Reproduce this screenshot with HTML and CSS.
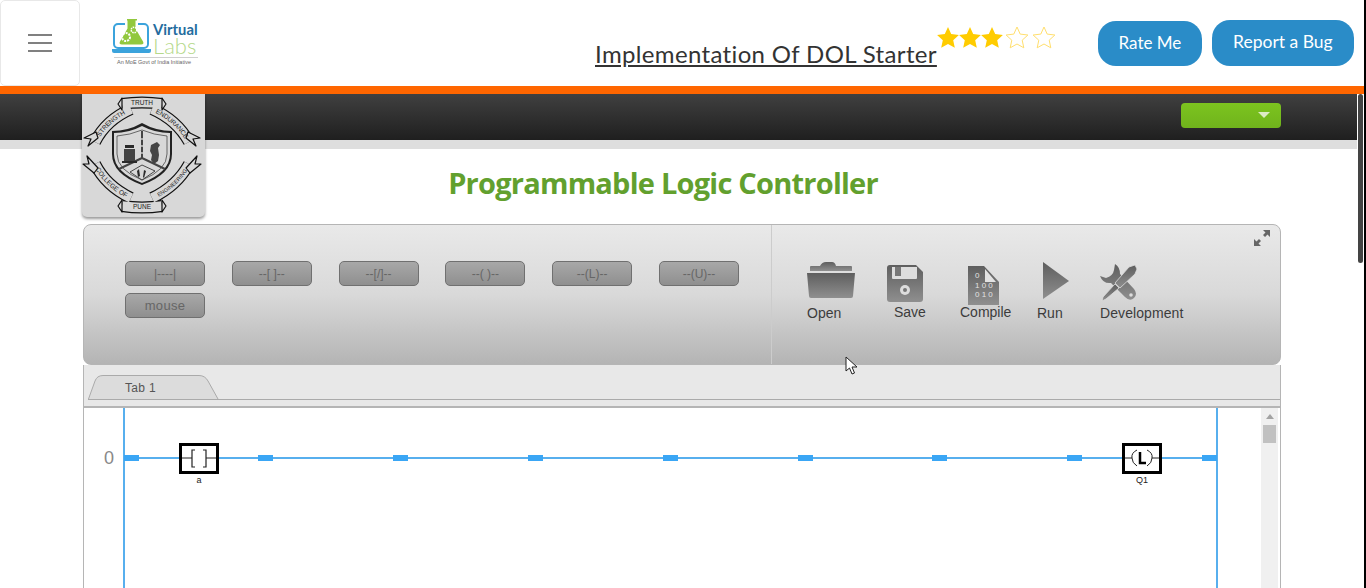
FILE: index.html
```html
<!DOCTYPE html>
<html lang="en">
<head>
<meta charset="utf-8">
<title>Implementation Of DOL Starter</title>
<link rel="stylesheet" href="styles.css">
</head>
<body>
<div class="viewport">
  <header class="topbar">
    <button class="menu-btn" aria-label="Menu"><span></span><span></span><span></span></button>
    <div class="vl-logo">
      <svg width="88" height="50" viewBox="0 0 88 50">
        <rect x="3" y="8" width="34" height="24" rx="4" fill="none" stroke="#3ba3dc" stroke-width="2"/>
        <path d="M14 2h14v3h-1v7l9 17H6l8-17V5z" fill="#fff"/>
        <path d="M16 3h10v1.500h-1.500v8l7.500 13q1.500 3-2 3H11q-3.500 0-2-3l7.500-13v-8H16z" fill="#92c83e"/>
        <circle cx="15" cy="21" r="4" fill="none" stroke="#fff" stroke-width="2" stroke-dasharray="2 1"/>
        <circle cx="23" cy="14" r="2.800" fill="none" stroke="#fff" stroke-width="1.500" stroke-dasharray="1.500 .8"/>
        <path d="M1 33h39v2q0 2-2 2H3q-2 0-2-2z" fill="#3ba3dc"/>
        <text x="42" y="19" class="vl-virtual">Virtual</text>
        <text x="42" y="38" class="vl-labs">Labs</text>
        <rect x="3" y="41" width="84" height="1" fill="#cfcfcf"/>
        <text x="6" y="48" class="vl-tag">An MoE Govt of India Initiative</text>
      </svg>
    </div>
    <h1 class="exp-title">Implementation Of DOL Starter</h1>
    <div class="stars">
      <svg width="120" height="24" viewBox="0 0 120 24">
        <defs><path id="star" d="M12 1L15.200 8.100 22.900 9 17.200 14.200 18.800 21.800 12 18 5.200 21.800 6.800 14.200 1.100 9 8.800 8.100z"/></defs>
        <use href="#star" x="0" fill="#ffcc00"/>
        <use href="#star" x="22" fill="#ffcc00"/>
        <use href="#star" x="44" fill="#ffcc00"/>
        <use href="#star" x="69" class="star-off"/>
        <use href="#star" x="96" class="star-off"/>
      </svg>
    </div>
    <button class="pill pill-rate">Rate Me</button>
    <button class="pill pill-bug">Report a Bug</button>
  </header>

  <div class="darkbar">
    <div class="darkbar-inner"><button class="green-select"><i class="caret"></i></button></div>
  </div>
  <div class="subbar"></div>

  <div class="crest">
    <svg width="123" height="123" viewBox="0 0 123 123">
      <defs>
        <path id="rL" d="M13 48Q24 26 49 15"/>
        <path id="rR" d="M70 15Q95 26 107 48"/>
        <path id="rBL" d="M13 70Q24 92 49 104"/>
        <path id="rBR" d="M70 104Q95 92 107 70"/>
      </defs>
      <g fill="none" class="ribbon-out">
        <use href="#rL"/><use href="#rR"/><use href="#rBL"/><use href="#rBR"/>
        <path d="M40 10Q60 7 80 10"/>
        <path d="M40 112Q60 115 80 112"/>
      </g>
      <g fill="none" class="ribbon-in">
        <use href="#rL"/><use href="#rR"/><use href="#rBL"/><use href="#rBR"/>
        <path d="M40 10Q60 7 80 10"/>
        <path d="M40 112Q60 115 80 112"/>
      </g>
      <g fill="#d8d8d8" stroke="#111" stroke-width="1.200" stroke-linejoin="round">
        <path d="M16 44L6 52l3-7-7-1 12-6z"/>
        <path d="M104 44l10 8-3-7 7-1-12-6z"/>
        <path d="M16 74L5 62l2 8-6 0 11 9z"/>
        <path d="M104 74l11-12-2 8 6 0-11 9z"/>
        <path d="M40 4l-4 6 4 6zM80 4l4 6-4 6z"/>
        <path d="M40 106l-4 6 4 6zM80 106l4 6-4 6z"/>
      </g>
      <path d="M30 37Q46 37 60 29 74 37 90 37V60Q90 80 60 91 30 80 30 60Z" fill="#222"/>
      <path d="M32 39Q47 39 60 32 73 39 88 39V60Q88 78 60 89 32 78 32 60Z" fill="#d8d8d8"/>
      <path d="M35 42Q48 41 60 36 72 41 85 42V60Q85 76 60 86 35 76 35 60Z" fill="none" stroke="#333" stroke-width=".7"/>
      <path d="M60 37V64M60 64L37 75M60 64L83 75" fill="none" stroke="#444" stroke-width="2"/>
      <g fill="#2a2a2a">
        <rect x="43" y="51" width="9" height="3"/>
        <path d="M42 55h11v12H42z" fill="#444"/>
        <path d="M40 67h15v2H40z"/>
        <circle cx="60" cy="45" r=".9" fill="#d8d8d8"/><circle cx="60" cy="52" r=".9" fill="#d8d8d8"/><circle cx="60" cy="59" r=".9" fill="#d8d8d8"/>
        <path d="M69 51l6-3 3 3-2 3 1 7-1 6-4 3-3-4 1-5-2-4z" fill="#444"/>
        <path d="M48 78l12-7 13 6-13 9z" fill="#d8d8d8" stroke="#222" stroke-width=".8"/>
        <path d="M55 77l2-2 1 7-2 1zM62 76l2 1-2 7-1-1z"/>
      </g>
      <text class="crest-txt" x="60" y="11" text-anchor="middle">TRUTH</text>
      <text class="crest-txt" dy="2"><textPath href="#rL" startOffset="50%" text-anchor="middle">STRENGTH</textPath></text>
      <text class="crest-txt" dy="2"><textPath href="#rR" startOffset="50%" text-anchor="middle">ENDURANCE</textPath></text>
      <text class="crest-txt" dy="2"><textPath href="#rBL" startOffset="50%" text-anchor="middle">COLLEGE OF</textPath></text>
      <text class="crest-txt crest-small" dy="2"><textPath href="#rBR" startOffset="50%" text-anchor="middle">ENGINEERING</textPath></text>
      <text class="crest-txt" x="60" y="115" text-anchor="middle">PUNE</text>
    </svg>
  </div>

  <main class="content">
    <h2 class="plc-title">Programmable Logic Controller</h2>
    <section class="panel">
      <div class="toolbar">
        <div class="tools-left">
          <button class="ladder-btn">|----|</button>
          <button class="ladder-btn">--[ ]--</button>
          <button class="ladder-btn">--[/]--</button>
          <button class="ladder-btn">--( )--</button>
          <button class="ladder-btn">--(L)--</button>
          <button class="ladder-btn">--(U)--</button>
          <button class="ladder-btn ladder-mouse">mouse</button>
        </div>
        <div class="tools-right">
          <div class="tool tool-open">
            <svg width="48" height="36" viewBox="0 0 48 36"><path d="M3 5q0-1 1-1h9q2-4 6-4h6q3 0 4 4h15q1 0 1 1v4H3z" fill="url(#ig)"/><path d="M0 11h48l-2 23q0 2-2 2H4q-2 0-2-2z" fill="url(#ig)"/></svg>
            <span>Open</span>
          </div>
          <div class="tool tool-save">
            <svg width="36" height="37" viewBox="0 0 36 37"><path d="M3 0h26l7 7v27q0 3-3 3H3q-3 0-3-3V3q0-3 3-3z" fill="url(#ig)"/><path d="M5 2h25v11q0 1-1 1H6q-1 0-1-1z" fill="#ddd"/><rect x="8" y="2" width="6" height="9" fill="#777"/><circle cx="18" cy="25" r="5" fill="#ddd"/><circle cx="18" cy="25" r="2" fill="#777"/></svg>
            <span>Save</span>
          </div>
          <div class="tool tool-compile">
            <svg width="31" height="39" viewBox="0 0 31 39"><path d="M0 0h16l15 16v23H0z" fill="url(#ig)"/><path d="M17 3l11 13H17z" fill="#e2e2e2"/><text x="7" y="12" class="bits">0</text><text x="7" y="22" class="bits">1 0 0</text><text x="7" y="31" class="bits">0 1 0</text></svg>
            <span>Compile</span>
          </div>
          <div class="tool tool-run">
            <svg width="26" height="37" viewBox="0 0 26 37"><path d="M0 0l26 19L0 37z" fill="url(#ig)"/></svg>
            <span>Run</span>
          </div>
          <div class="tool tool-dev">
            <svg width="38" height="37" viewBox="0 0 38 37"><path d="M15 0Q20 3 20 10L34 25Q38 30 34 34 30 38 25 33L11 19Q3 20 0 12L6 14Q13 12 14 6Z" fill="url(#ig)"/><circle cx="31" cy="31" r="1.800" fill="#ddd"/><path d="M29 3l6-2 2 4-2 5-15 14-5-5z" fill="url(#ig)" stroke="#ddd" stroke-width=".8"/><path d="M15 20l4 4L6 35l-4 2 1-4z" fill="url(#ig)" stroke="#ddd" stroke-width=".8"/></svg>
            <span>Development</span>
          </div>
        </div>
        <svg class="expand" width="18" height="18" viewBox="0 0 18 18"><path d="M17 1v7l-2.500-2.500-2.500 2.500-2-2 2.500-2.500L10 1zM1 17v-7l2.500 2.500L6 10l2 2-2.500 2.500L8 17z" fill="#666"/></svg>
      </div>
      <div class="tabs"><div class="tab"><svg class="tab-shape" width="132" height="24" viewBox="0 0 132 24"><path d="M.5 24L7 6Q9 .5 15 .5h96q6 0 9 5.500l10 18" fill="#dcdcdc" stroke="#aaa"/></svg><span class="tab-label">Tab 1</span></div></div>
      <div class="canvas">
        <div class="rail rail-l"></div>
        <div class="rail rail-r"></div>
        <span class="rung-no">0</span>
        <div class="wire"></div>
        <i class="node node-a"></i><i class="node node-b"></i><i class="node node-c"></i><i class="node node-d"></i><i class="node node-e"></i><i class="node node-f"></i><i class="node node-g"></i><i class="node node-h"></i><i class="node node-i"></i>
        <div class="elem elem-a">
          <svg width="40" height="31" viewBox="0 0 40 31"><rect x="1.500" y="1.500" width="37" height="28" fill="#fff" stroke="#000" stroke-width="3"/><path d="M3 15h10M27 15h10" stroke="#222"/><path d="M16 7h-3v17h3M24 7h3v17h-3" fill="none" stroke="#222" stroke-width="1.200"/></svg>
          <span>a</span>
        </div>
        <div class="elem elem-q">
          <svg width="40" height="31" viewBox="0 0 40 31"><rect x="1.500" y="1.500" width="37" height="28" fill="#fff" stroke="#000" stroke-width="3"/><path d="M3 15h7M30 15h7" stroke="#222"/><path d="M15 7Q9 10 10 15q0 5 5 8M25 7q6 3 5 8 0 5-5 8" fill="none" stroke="#222"/><path d="M18 9v11h6" fill="none" stroke="#000" stroke-width="2.500"/></svg>
          <span>Q1</span>
        </div>
        <div class="canvas-scroll"><i class="scroll-up"></i><i class="scroll-thumb"></i></div>
      </div>
    </section>
  </main>

  <div class="page-scroll"></div>
  <svg class="cursor" width="14" height="20" viewBox="0 0 14 20"><path d="M1 1v14l3.500-3 2.500 6 2.500-1-2.500-6H12z" fill="#fff" stroke="#222"/></svg>
  <svg class="defs" width="0" height="0"><defs><linearGradient id="ig" x1="0" y1="0" x2="0" y2="1"><stop offset="0" stop-color="#5e5e5e"/><stop offset="1" stop-color="#8f8f8f"/></linearGradient></defs></svg>
</div>
</body>
</html>
```
FILE: styles.css
```css
* { box-sizing: border-box; }
html, body { margin: 0; height: 100%; overflow: hidden; background: #000; }
body { font-family: "Liberation Sans", Arial, sans-serif; }
.viewport { position: relative; width: 1366px; height: 588px; overflow: hidden; background: linear-gradient(90deg, #fff 1364px, #000 1364px); padding-right: 2px; }
.topbar { height: 94px; border-bottom: 8px solid #ff6600; background: #fff; display: flex; align-items: flex-start; }
.menu-btn { width: 80px; height: 86px; flex: none; background: #fff; border: 1px solid #e8e8e8; border-radius: 5px; display: flex; flex-direction: column; align-items: center; justify-content: center; gap: 6px; padding: 0; }
.menu-btn span { width: 24px; height: 2px; background: #808080; }
.vl-logo { margin: 16px 0 0 31px; width: 88px; height: 50px; flex: none; }
.vl-virtual { font: 700 14.800px "Lato", sans-serif; fill: #246c9e; }
.vl-labs { font: 300 22px "Lato", sans-serif; fill: #b5d98a; }
.vl-tag { font: 5.500px "Liberation Sans", sans-serif; fill: #666; }
.exp-title { margin: 37px 0 0 396px; font: 400 24px/34px "Lato", sans-serif; color: #333; text-decoration: underline; white-space: nowrap; letter-spacing: .35px; }
.stars { margin: 26px 0 0 -1px; width: 120px; height: 24px; flex: none; }
.star-off { fill: #fff; stroke: #ffdf6e; stroke-width: 1; }
.pill { height: 45px; margin-top: 21px; background: #2a8cc8; color: #fff; border: 0; border-radius: 18px; font: 400 17px "Lato", sans-serif; padding: 0 0 3px; flex: none; }
.pill-rate { width: 104px; margin-left: 42px; }
.pill-bug { width: 142px; height: 46px; margin: 20px 0 0 10px; font-size: 17.500px; }
.darkbar { height: 46px; margin-right: 7px; background: linear-gradient(#404040, #1f1f1f); }
.darkbar-inner { padding: 9px 0 0 1181px; }
.green-select { display: block; width: 100px; height: 25px; padding: 0; border: 0; border-radius: 4px; background: linear-gradient(#7cc41f, #70b31c); position: relative; }
.caret { position: absolute; left: 77px; top: 9px; border-style: solid; border-width: 6px 6px 0; border-color: #dcebc4 transparent transparent; }
.subbar { height: 9px; margin-right: 7px; background: #dedede; }
.crest { position: absolute; left: 82px; top: 94px; width: 123px; height: 123px; background: #d8d8d8; border-radius: 0 0 5px 5px; box-shadow: 0 2px 3px rgba(0,0,0,.4); }
.crest svg { display: block; }
.crest-txt { font: 6.500px "Liberation Sans", sans-serif; fill: #222; }
.crest-small { font-size: 5.500px; }
.ribbon-out { stroke: #111; stroke-width: 12; }
.ribbon-in { stroke: #d8d8d8; stroke-width: 9.600; }
.content { margin-right: 7px; padding: 0 76px 0 83px; }
.plc-title { margin: 0; height: 75px; padding: 18px 38px 0 0; text-align: center; font: 700 29px/32px "Open Sans", sans-serif; color: #62a02e; letter-spacing: -.77px; }
.panel { width: 1198px; }
.toolbar { position: relative; height: 141px; display: flex; border: 1px solid #b5b5b5; border-radius: 8px; background: linear-gradient(#e9e9e9, #d9d9d9 50%, #b4b4b4); }
.tools-left { width: 688px; flex: none; padding: 36px 0 0 41px; display: flex; flex-wrap: wrap; align-content: flex-start; column-gap: 26.800px; row-gap: 7px; border-right: 1px solid #ccc; }
.ladder-btn { width: 80px; height: 25px; padding: 0; border: 1px solid #707070; border-radius: 5px; background: linear-gradient(#a8a8a8, #8f8f8f); color: #666; font: 12px "Liberation Sans", sans-serif; }
.ladder-mouse { font-size: 13px; letter-spacing: .3px; }
.tools-right { display: flex; align-items: flex-start; padding: 37px 0 0 35px; }
.tool { display: flex; flex-direction: column; font-size: 14px; line-height: 16px; color: #3c3c3c; }
.tool svg { display: block; }
.tool-open { width: 80px; }
.tool-open svg { margin-bottom: 7px; }
.tool-save { width: 73px; padding-top: 3px; }
.tool-save svg { margin-bottom: 2px; }
.tool-save span { margin-left: 7px; }
.tool-compile { width: 78px; padding: 4px 0 0 8px; }
.tool-compile svg { margin-bottom: -1px; }
.tool-compile span { margin-left: -8px; }
.tool-run { width: 62px; padding-left: 5px; }
.tool-run svg { margin-bottom: 6px; }
.tool-run span { margin-left: -6px; }
.tool-dev { padding-top: 2px; }
.tool-dev svg { margin-bottom: 4px; }
.tool-dev span { letter-spacing: .08px; }
.expand { position: absolute; right: 9px; top: 4px; }
.tabs { height: 43px; background: #e8e8e8; border-left: 1px solid #b5b5b5; border-right: 1px solid #b5b5b5; border-bottom: 2px solid #b5b5b5; padding: 10px 0 0 4px; }
.tab { position: relative; width: 132px; height: 25px; border-bottom: 1px solid #aaa; }
.tab::after { content: ""; position: absolute; left: 132px; bottom: -1px; width: 1060px; border-bottom: 1px solid #aaa; }
.tab-shape { position: absolute; left: 0; top: 0; }
.tab-label { position: relative; display: block; padding: 6px 0 0 37px; font-size: 12px; line-height: 14px; color: #555; letter-spacing: .3px; }
.canvas { position: relative; height: 200px; background: #fff; border-left: 1px solid #b5b5b5; border-right: 1px solid #b5b5b5; }
.rail { position: absolute; top: 0; bottom: 0; width: 2px; background: #57afee; }
.rail-l { left: 39px; }
.rail-r { left: 1132px; }
.rung-no { position: absolute; left: 20px; top: 40px; font-size: 18px; line-height: 20px; color: #888; }
.wire { position: absolute; left: 40px; width: 1092px; top: 49px; height: 2px; background: #57afee; }
.node { position: absolute; top: 47px; width: 15px; height: 6px; background: #3aa6f5; }
.node-a { left: 40px; }
.node-b { left: 174px; }
.node-c { left: 309px; }
.node-d { left: 444px; }
.node-e { left: 579px; }
.node-f { left: 714px; }
.node-g { left: 848px; }
.node-h { left: 983px; }
.node-i { left: 1118px; }
.elem { position: absolute; top: 35px; width: 40px; text-align: center; font-size: 9px; line-height: 10px; color: #222; }
.elem svg { display: block; margin-bottom: 1px; }
.elem-a { left: 95px; }
.elem-q { left: 1038px; }
.canvas-scroll { position: absolute; left: 1177px; top: 0; bottom: 0; width: 17px; background: #f0f0f0; }
.scroll-up { position: absolute; left: 5px; top: 6px; border-style: solid; border-width: 0 4px 5px; border-color: transparent transparent #a3a3a3; }
.scroll-thumb { position: absolute; left: 2px; top: 17px; width: 13px; height: 18px; background: #c1c1c1; }
.page-scroll { position: absolute; left: 1358px; top: 94px; width: 5px; height: 169px; border-radius: 3px; background: #444; }
.cursor { position: absolute; left: 845px; top: 356px; }
.defs { position: absolute; }
.bits { font: 8px "Liberation Sans", sans-serif; fill: #e2e2e2; }
```
